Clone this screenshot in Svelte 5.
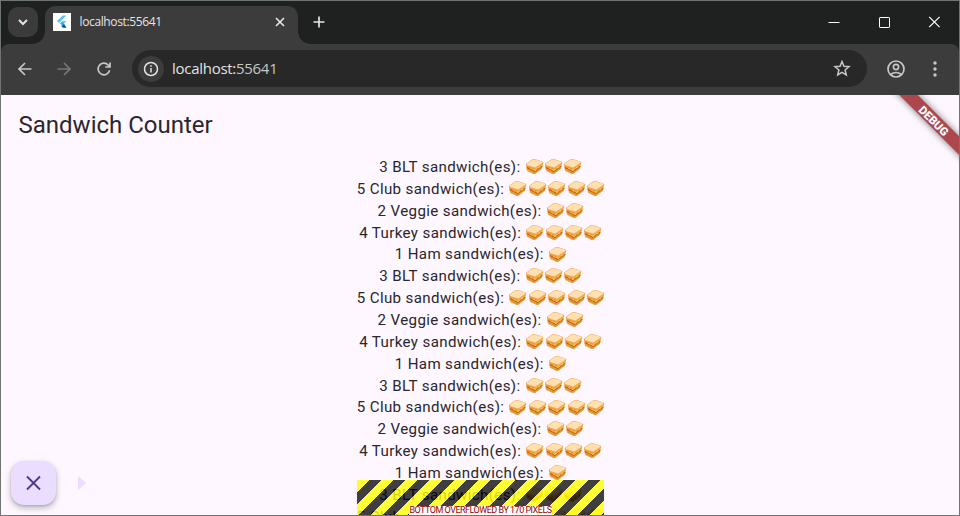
<script>
  const kinds = [[3, 'BLT'], [5, 'Club'], [2, 'Veggie'], [4, 'Turkey'], [1, 'Ham']];
  const orders = Array.from({ length: 17 }, (_, i) => kinds[i % 5]);
</script>

{#snippet sandwich()}
  <svg class="food" viewBox="0 0 20 18" aria-hidden="true">
    <path d="M1.2 6.5 2 12.6l7 4 2-.4 6.6-5.6.8-6.3z" fill="#e58b2c"/>
    <path d="M1.5 8.8 10 12.2l8-6v3L10.4 15 2 11.6z" fill="#fbd13f"/>
    <path d="m1.8 9.8 2 .8 2 1.7 1.8.2 2 1.7 1.8-.6 2-2.1 1.6-.5 2.6-2.7" fill="none" stroke="#d54b22" stroke-width="1.4"/>
    <path d="m2.2 11.6 2.2.5 1.8 1.3 2 .3 1.6 1.2 2.2-1.5 2-1.8 3.2-2.4" fill="none" stroke="#b5ab3b" stroke-width=".8"/>
    <path d="M1 6 8 1.1l2-.2 8 2.6.8 1.2-.3 1.5-8 5.4L1.4 8z" fill="#efa855"/>
    <path d="m1.7 5.8 6.5-4.3 1.8-.1 7.8 2.5.2.9-7.4 4.9-8.5-2.6z" fill="#ffe1b1"/>
    <path d="m2 12.8 7.5 3.4 8.1-5.6" fill="none" stroke="#eda650" stroke-width="1"/>
  </svg>
{/snippet}

<div class="window">
  <header class="tabs">
    <button class="search" aria-label="Search tabs"><svg width="12" height="12" viewBox="0 0 12 12"><path d="m2 4 4 4 4-4" stroke-width="2"/></svg></button>
    <div class="tab">
      <svg class="favicon" width="18" height="18" viewBox="0 0 18 18"><path fill="#fff" d="M0 0h18v18H0z"/><path fill="#54c5f8" d="M9.8 2.5h3.6L6 10 4 8zM9.8 8h3.6l-4.2 4.5-1.9-2z"/><path fill="#01579b" d="m9.2 12.5 1.8-1.8 2.5 4H10l-2-2z"/><path fill="#29b6f6" d="m7.2 10.6 2-2 2 2-2 2z"/></svg>
      <span>localhost:55641</span>
      <svg class="close" width="12" height="12" viewBox="0 0 12 12"><path d="m2 2 8 8m0-8-8 8" stroke-width="1.7"/></svg>
    </div>
    <svg class="plus" width="14" height="14" viewBox="0 0 14 14"><path d="M7 1.5v11M1.5 7h11" stroke-width="1.7"/></svg>
    <div class="controls">
      <svg width="12" height="12" viewBox="0 0 12 12"><path d="M.5 6.5h11"/></svg>
      <svg width="12" height="12" viewBox="0 0 12 12"><rect x="1.5" y="1.5" width="10" height="10" rx=".6"/></svg>
      <svg width="12" height="12" viewBox="0 0 12 12"><path d="m1.2.8 10.4 10.4m0-10.4L1.2 11.2" stroke-width="1.2"/></svg>
    </div>
  </header>
  <nav class="toolbar">
    <svg class="back" width="16" height="16" viewBox="0 0 16 16"><path d="M14.5 8H2m6-6L2 8l6 6" stroke-width="1.7"/></svg>
    <svg class="forward" width="16" height="16" viewBox="0 0 16 16"><path d="M1.5 8H14M8 2l6 6-6 6" stroke-width="1.7"/></svg>
    <svg class="reload" width="16" height="16" viewBox="0 0 16 16"><path d="M13.6 9.3A5.8 5.8 0 1 1 12.2 4L14 6M14 1.5V6H9.3" stroke-width="1.7"/></svg>
    <div class="address">
      <i><svg width="16" height="16" viewBox="0 0 16 16"><circle cx="8" cy="8" r="6.5" stroke-width="1.5"/><path d="M8 7v4.5M8 4.3v1.5" stroke-width="1.5"/></svg></i>
      <span>localhost:<em>55641</em></span>
      <svg class="star" width="18" height="18" viewBox="0 0 18 18"><path d="m9 1.5 1.9 4.8 5.1.4-3.9 3.3 1.2 5L9 12.3 4.7 15l1.2-5L2 6.7l5.1-.4z" stroke-width="1.5"/></svg>
    </div>
    <svg class="profile" width="20" height="20" viewBox="0 0 20 20"><circle cx="10" cy="10" r="8" stroke-width="1.7"/><circle cx="10" cy="8" r="2.6" stroke-width="1.6"/><path d="M4.5 15.5q5.5-4 11 0" stroke-width="1.6"/></svg>
    <svg class="more" width="6" height="18" viewBox="0 0 6 18"><circle cx="3" cy="3" r="1.7"/><circle cx="3" cy="9" r="1.7"/><circle cx="3" cy="15" r="1.7"/></svg>
  </nav>
  <main>
    <h1>Sandwich Counter</h1>
    <section>
      {#each orders as [count, name]}
        <p><span>{count} {name} sandwich(es):</span><b>{#each Array(count) as _}{@render sandwich()}{/each}</b></p>
      {/each}
    </section>
    <div class="overflow"><span>BOTTOM OVERFLOWED BY 170 PIXELS</span></div>
    <div class="debug"><span>DEBUG</span></div>
    <button class="fab" aria-label="Close"><svg width="18" height="18" viewBox="0 0 18 18"><path d="m2 2.5 13 13m0-13-13 13" stroke-width="1.9"/></svg></button>
    <div class="arrow"></div>
  </main>
</div>

<style>
  :global(body) { background: #6e6e6e; }
  * { box-sizing: border-box; }
  .window { width: 960px; height: 516px; border: 1px solid #707572; overflow: hidden; background: #1e2120; color: #e3e3e3; }
  svg { display: block; flex: none; fill: none; stroke: currentColor; stroke-width: 1; }
  button { border: 0; padding: 0; display: grid; place-items: center; }
  .tabs { height: 43px; display: flex; align-items: center; padding: 0 0 1px 7px; }
  .search { width: 30px; height: 30px; border-radius: 10px; background: #3b3b3b; color: #e3e3e3; }
  .tab { position: relative; width: 253px; height: 38px; margin: 6px 0 0 7px; padding: 0 11px 7px 8px; display: flex; align-items: center; border-radius: 10px 10px 0 0; background: #3c3c3c; font: 12px "Open Sans", sans-serif; }
  .tab::before, .tab::after { content: ""; position: absolute; bottom: 0; width: 12px; height: 12px; }
  .tab::before { left: -12px; background: radial-gradient(circle at 0 0, transparent 11.5px, #3c3c3c 12px); }
  .tab::after { right: -12px; background: radial-gradient(circle at 100% 0, transparent 11.5px, #3c3c3c 12px); }
  .favicon { stroke: none; margin-right: 8.5px; }
  .tab span { letter-spacing: -.37px; margin-top: -1px; }
  .close { margin-left: auto; }
  .tab .close { margin-right: 1px; }
  .plus { margin-left: 14px; }
  .controls { margin-left: auto; display: flex; gap: 38px; margin-right: 19px; color: #fff; }
  .toolbar { height: 51px; display: flex; align-items: center; background: #3c3c3c; border-radius: 8px 8px 0 0; padding: 0 21px 2px 16px; color: #c7c7c7; }
  .forward { margin-left: 23px; color: #777; }
  .reload { margin-left: 24px; }
  .address { margin-left: 20px; width: 735px; height: 37px; border-radius: 19px; background: #282828; display: flex; align-items: center; padding: 0 16.5px 0 6px; color: #e3e3e3; font: 15px "Open Sans", sans-serif; }
  .address i { width: 26px; height: 26px; border-radius: 50%; background: #3c3c3c; display: grid; place-items: center; }
  .address span { margin: -2px 0 0 8px; letter-spacing: -.28px; }
  em { font-style: normal; color: #c7c7c7; }
  .star { margin-left: auto; color: #c7c7c7; }
  .profile { margin-left: 19px; }
  .more { margin-left: auto; fill: currentColor; stroke: none; }
  main { position: relative; height: 420px; overflow: hidden; background: #fef7ff; color: #29262d; font-family: Roboto, sans-serif; }
  h1 { margin: 0; height: 61px; padding: 0 17.5px; font-size: 24px; line-height: 60px; font-weight: 400; }
  section { display: flex; flex-direction: column; padding-left: 2px; }
  p { margin: 0; height: 21.87px; flex: none; display: flex; justify-content: center; align-items: center; font-size: 15.1px; line-height: 22px; letter-spacing: .37px; white-space: pre; }
  b { margin-left: 4px; display: flex; }
  .food { width: 19.4px; height: 17.5px; stroke: none; }
  .overflow { position: absolute; left: 356px; top: 385px; width: 247px; height: 35px; background: repeating-linear-gradient(135deg, rgba(255,255,0,.8) 0 8.6px, rgba(0,0,0,.75) 8.6px 17.2px); display: flex; justify-content: center; align-items: flex-end; }
  .overflow span { background: #fff; color: #900; font-size: 9px; line-height: 9px; letter-spacing: -.5px; white-space: nowrap; }
  .debug { position: absolute; right: -30px; top: 19px; width: 110px; height: 13px; background: #ac484d; transform: rotate(45deg); box-shadow: 0 0 7px #0008; text-align: center; font: 900 11.5px/14px Roboto, sans-serif; color: #fff; }
  .fab { position: absolute; left: 10px; top: 366px; width: 45px; height: 44px; border-radius: 13px; color: #4f378a; background: #eaddff; box-shadow: 0 3px 6px #0004, 0 1px 2px #0002; }
  .arrow { position: absolute; left: 77px; top: 381px; border-left: 8px solid #eaddff; border-top: 7px solid transparent; border-bottom: 7px solid transparent; }
</style>
